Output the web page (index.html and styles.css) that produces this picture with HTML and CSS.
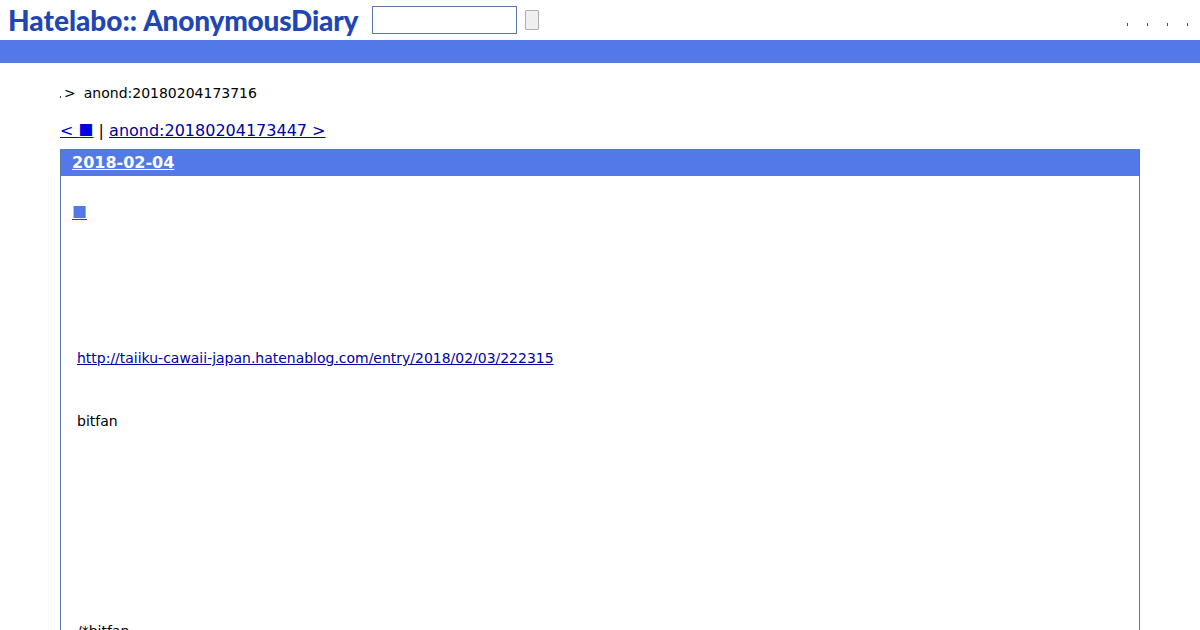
FILE: index.html
```html
<!DOCTYPE html>
<html lang="ja">
<head>
  <meta charset="utf-8">
  <title>anond:20180204173716</title>
  <link rel="stylesheet" href="styles.css">
</head>
<body>
<div class="header">
  <a class="logo" href="#"><span class="logo_a">Hatelabo::</span><span class="logo_b">AnonymousDiary</span></a>
  <form class="search">
    <input class="search_input" type="text">
    <button class="search_btn" type="button"></button>
  </form>
  <div class="usermenu">
    <i class="tick"></i>
    <i class="tick"></i>
    <i class="tick"></i>
    <i class="tick"></i>
  </div>
</div>
<div class="bar"></div>
<div class="hero">
  <div class="crumb"><i class="tick"></i><span class="crumb_sep">&gt;</span><span>anond:20180204173716</span></div>
  <div class="pager"><a href="#">&lt; <span class="sq">■</span></a> | <a href="#">anond:20180204173447 &gt;</a></div>
</div>
<div class="day">
  <h2 class="day_title"><a href="#">2018-02-04</a></h2>
  <div class="day_body">
    <h3 class="entry_title"><a href="#"><span class="sq">■</span></a></h3>
    <p class="entry_link"><a href="#">http://taiiku-cawaii-japan.hatenablog.com/entry/2018/02/03/222315</a></p>
    <p class="entry_name">bitfan</p>
    <p class="entry_tag">/*bitfan</p>
  </div>
</div>
</body>
</html>
```

FILE: styles.css
```css
html, body {
  margin: 0;
  background: white;
  color: black;
  font-family: "DejaVu Sans", sans-serif;
  font-size: 14px;
  overflow: hidden;
}
a {
  color: #0000a0;
}
.sq {
  font-family: "Noto Sans CJK JP", sans-serif;
  font-size: 15px;
  line-height: 1;
}
.header {
  height: 40px;
  display: flex;
  align-items: center;
  padding-left: 8px;
}
.logo {
  width: 350px;
  font-family: Lato, sans-serif;
  font-weight: 900;
  font-size: 28px;
  color: #2146b4;
  text-decoration: none;
  white-space: nowrap;
}
.logo_a {
  margin-right: 6px;
}
.logo_b {
  letter-spacing: -0.2px;
}
.search {
  display: flex;
  align-items: center;
  margin-left: 14px;
}
.search_input {
  box-sizing: border-box;
  width: 145px;
  height: 28px;
  margin: 0;
  padding: 0;
  background: white;
  border: 1px solid #5b78a8;
}
.search_btn {
  box-sizing: border-box;
  width: 14px;
  height: 20px;
  margin: 0 0 0 8px;
  padding: 0;
  background: #efefef;
  border: 1px solid #adadad;
  border-radius: 1px;
}
.usermenu {
  margin-left: auto;
  display: flex;
  gap: 19px;
  padding: 8px 12px 0 0;
}
.tick {
  display: block;
  width: 1px;
  height: 3px;
  background: #555;
}
.bar {
  height: 23px;
  background: #5279e7;
}
.hero {
  padding: 22px 60px 0;
}
.crumb {
  display: flex;
  align-items: baseline;
  height: 17px;
  line-height: 17px;
}
.crumb .tick {
  height: 2px;
}
.crumb_sep {
  margin: 0 8px 0 3px;
  font-size: 14px;
}
.pager {
  margin-top: 19px;
  font-size: 16px;
  line-height: 19px;
  white-space: pre;
}
.pager a:first-child {
  color: #0000e0;
}
.day {
  box-sizing: border-box;
  margin: 9px 60px 0;
  border: 1px solid #5b78a8;
  border-top: 0;
}
.day_title {
  margin: 0;
  height: 27px;
  padding-left: 11px;
  background: #5279e7;
  font-size: 16px;
  line-height: 27px;
}
.day_title a {
  color: white;
}
.day_body {
  height: 460px;
}
.entry_title {
  margin: 0;
  padding: 27px 0 0 11px;
  font-size: 16px;
  font-weight: normal;
  line-height: 20px;
}
.entry_title a {
  color: #5279e7;
  text-decoration-color: #2146b4;
}
.entry_link {
  margin: 127px 0 0 16px;
  line-height: 17px;
  font-size: 13.97px;
}
.entry_name {
  margin: 46px 0 0 16px;
  line-height: 17px;
}
.entry_tag {
  margin: 193px 0 0 16px;
  line-height: 17px;
}
```
